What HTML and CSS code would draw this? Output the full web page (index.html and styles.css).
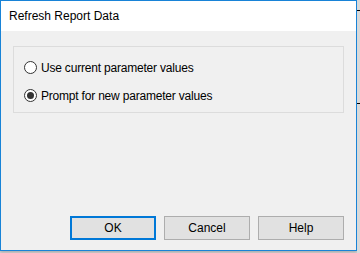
FILE: index.html
```html
<!DOCTYPE html>
<html>
<head>
<meta charset="utf-8">
<link rel="stylesheet" href="styles.css">
</head>
<body>
<div class="screen">
  <div class="dialog">
    <div class="titlebar">Refresh Report Data</div>
    <div class="content">
      <div class="group">
        <label class="option">
          <span class="radio"></span>
          <span class="label">Use current parameter values</span>
        </label>
        <label class="option">
          <span class="radio checked"></span>
          <span class="label">Prompt for new parameter values</span>
        </label>
      </div>
      <div class="buttons">
        <button class="btn default">OK</button>
        <button class="btn">Cancel</button>
        <button class="btn">Help</button>
      </div>
    </div>
  </div>
  <div class="backdrop">
    <span class="tick tick-1"></span>
    <span class="tick tick-2"></span>
  </div>
</div>
</body>
</html>
```
FILE: styles.css
```css
html, body {
  margin: 0;
  padding: 0;
}
body {
  width: 360px;
  height: 253px;
  overflow: hidden;
  background: #d6d6d6;
  font-family: "Liberation Sans", Arial, sans-serif;
  font-size: 12px;
  color: #000;
}
.screen {
  display: flex;
  align-items: flex-start;
  height: 253px;
}
.dialog {
  width: 355px;
  height: 249px;
  border: 1px solid #1883d7;
  background: #f0f0f0;
  display: flex;
  flex-direction: column;
  box-shadow: 0 1px 3px rgba(0,0,0,0.25);
  flex: none;
}
.titlebar {
  height: 30px;
  background: #fff;
  padding-left: 8px;
  line-height: 30px;
  font-size: 12px;
}
.content {
  flex: 1;
  display: flex;
  flex-direction: column;
  padding: 15px 12px 10px 12px;
}
.group {
  border: 1px solid #dcdcdc;
  display: flex;
  flex-direction: column;
  padding: 14px 0 0 10px;
  box-sizing: border-box;
  height: 67px;
  gap: 15px;
}
.option {
  display: flex;
  align-items: center;
  height: 13px;
}
.radio {
  width: 11px;
  height: 11px;
  border: 1px solid #333;
  border-radius: 50%;
  background: #fff;
  position: relative;
  flex: none;
}
.radio.checked::after {
  content: "";
  position: absolute;
  left: 2px;
  top: 2px;
  width: 7px;
  height: 7px;
  border-radius: 50%;
  background: #333;
}
.label {
  margin-left: 4px;
  letter-spacing: -0.2px;
}
.buttons {
  margin-top: auto;
  display: flex;
  justify-content: flex-end;
  gap: 8px;
}
.btn {
  width: 86px;
  height: 24px;
  box-sizing: border-box;
  border: 1px solid #adadad;
  background: #e1e1e1;
  font-family: "Liberation Sans", Arial, sans-serif;
  font-size: 12px;
  color: #000;
  padding: 0;
}
.btn.default {
  border: 2px solid #0078d7;
}
.backdrop {
  flex: 1;
  height: 253px;
  position: relative;
  background: #d9d9d9;
}
.tick {
  position: absolute;
  left: 0;
  right: 0;
  height: 1px;
  background: #000;
}
.tick-1 { top: 10px; }
.tick-2 { top: 103px; }
```
